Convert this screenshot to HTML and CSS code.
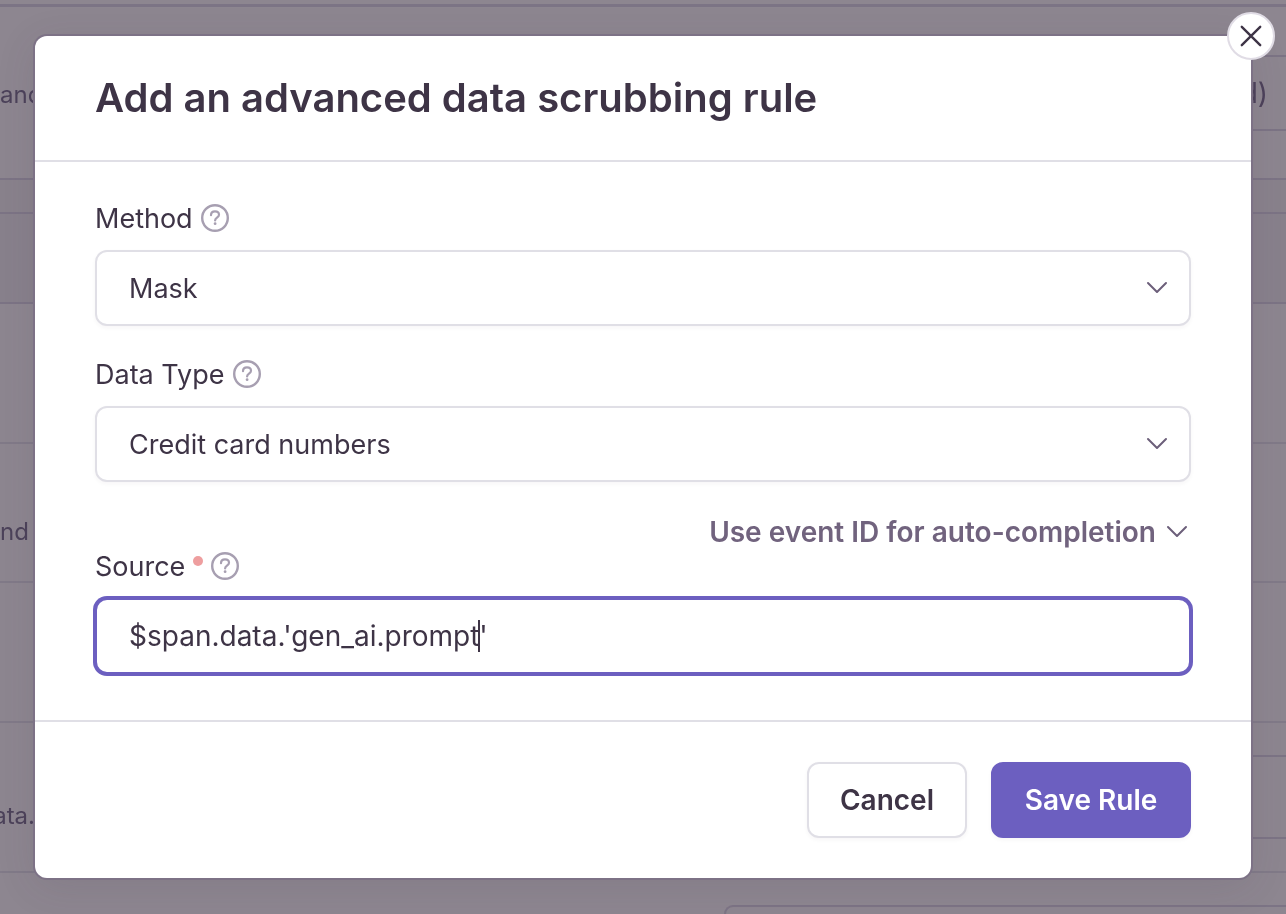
FILE: index.html
```html
<!DOCTYPE html>
<html lang="en">
<head>
<meta charset="utf-8">
<meta name="viewport" content="width=device-width, initial-scale=1">
<title>Add an advanced data scrubbing rule</title>
<link rel="stylesheet" href="styles.css">
</head>
<body>
<div class="page">
  <div class="page-top"></div>
  <div class="setting setting-first"><span class="first-line">and</span><span class="setting-value">d)</span></div>
  <div class="page-gap"></div>
  <div class="panel-head"></div>
  <div class="setting"></div>
  <div class="setting setting-text"><span class="second-line">nd e</span></div>
  <div class="setting"></div>
  <div class="setting setting-tall"><span class="second-line clipped">ata.</span><span class="setting-value"></span></div>
  <div class="page-card"></div>
</div>

<div class="overlay">
  <form class="modal" role="dialog" aria-labelledby="modal-title">
    <button class="close" type="button" aria-label="Close">
      <svg width="22" height="22" viewBox="0 0 22 22"><path d="M1.8 1.8l18.4 18.4M20.2 1.8L1.8 20.2"/></svg>
    </button>
    <header class="modal-header"><h1 id="modal-title">Add an advanced data scrubbing rule</h1></header>
    <div class="modal-body">
      <div class="field">
        <div class="label-row">
          <label for="method">Method</label>
          <svg class="help" viewBox="0 0 28 28"><circle cx="14" cy="14" r="12.8"/><path d="M10 11.2c0-2.3 1.7-3.8 4-3.8s4 1.4 4 3.4c0 2.8-3.9 3-3.9 5.6"/><circle class="help-dot" cx="14.1" cy="19.7" r="1.4"/></svg>
        </div>
        <div class="control">
          <select id="method"><option>Mask</option></select>
          <svg class="chevron" viewBox="0 0 22 14"><path d="M2 2l9 9 9-9"/></svg>
        </div>
      </div>
      <div class="field">
        <div class="label-row">
          <label for="type">Data Type</label>
          <svg class="help" viewBox="0 0 28 28"><circle cx="14" cy="14" r="12.8"/><path d="M10 11.2c0-2.3 1.7-3.8 4-3.8s4 1.4 4 3.4c0 2.8-3.9 3-3.9 5.6"/><circle class="help-dot" cx="14.1" cy="19.7" r="1.4"/></svg>
        </div>
        <div class="control">
          <select id="type"><option>Credit card numbers</option></select>
          <svg class="chevron" viewBox="0 0 22 14"><path d="M2 2l9 9 9-9"/></svg>
        </div>
      </div>
      <button class="toggle" type="button">Use event ID for auto-completion
        <svg viewBox="0 0 22 14"><path d="M2 2l9 9 9-9"/></svg>
      </button>
      <div class="field">
        <div class="label-row">
          <label for="source">Source</label>
          <span class="required"></span>
          <svg class="help" viewBox="0 0 28 28"><circle cx="14" cy="14" r="12.8"/><path d="M10 11.2c0-2.3 1.7-3.8 4-3.8s4 1.4 4 3.4c0 2.8-3.9 3-3.9 5.6"/><circle class="help-dot" cx="14.1" cy="19.7" r="1.4"/></svg>
        </div>
        <div class="control">
          <input id="source" type="text" value="$span.data.'gen_ai.prompt'" required>
          <span class="caret"></span>
        </div>
      </div>
    </div>
    <footer class="modal-footer">
      <button class="button" type="button">Cancel</button>
      <button class="button primary" type="submit">Save Rule</button>
    </footer>
  </form>
</div>
</body>
</html>
```
FILE: styles.css
```css
* { box-sizing: border-box; }
body {
  margin: 0;
  color: #3e3446;
  background: #8d8690;
  font: 27px/36px Inter, Roboto, sans-serif;
}
button, input, select { font: inherit; color: inherit; }

/* Page behind the dialog */
.page {
  position: fixed;
  inset: 0;
  display: flex;
  flex-direction: column;
  overflow: hidden;
  color: #4c425a;
  font-size: 24px;
}
.page-top { height: 7px; border-bottom: 3px solid #7c7485; flex: none; }
.setting {
  flex: none;
  height: 140px;
  display: flex;
  justify-content: space-between;
  align-items: center;
  border-bottom: 2px solid #817a88;
}
.setting-first { height: 173px; border-color: #7c7485; }
.setting-text { height: 139px; }
.setting-tall { height: 150px; }
.setting-value {
  width: 300px;
  height: 76px;
  padding: 18px;
  border: 2px solid #7c7485;
  border-right: 0;
  text-align: right;
  font-size: 28px;
}
.setting-tall .setting-value { height: 84px; }
.first-line { padding-top: 4px; }
.second-line { padding-top: 38px; }
.clipped { width: 35px; display: flex; justify-content: flex-end; }
.page-gap { flex: none; height: 32px; background: #89828c; }
.panel-head {
  flex: none;
  height: 92px;
  border: solid #7c7485;
  border-width: 2px 0;
  background: #88818c;
}
.page-card {
  flex: 1;
  margin: 32px 0 0 724px;
  border: solid #7c7485;
  border-width: 2px 0 0 2px;
  border-top-left-radius: 12px;
}

/* Dialog */
.overlay { position: relative; padding: 36px 35px; }
.modal {
  position: relative;
  background: #fff;
  border-radius: 12px;
  box-shadow: 0 0 0 2px #7d7286, 0 8px 40px rgba(62, 52, 70, 0.12);
}
.close {
  position: absolute;
  top: -24px;
  right: -24px;
  width: 48px;
  height: 48px;
  padding: 0;
  display: grid;
  place-items: center;
  background: #fff;
  border: 2px solid #e0dce5;
  border-radius: 50%;
}
svg { fill: none; stroke: #6c5f7a; stroke-width: 2; stroke-linecap: round; stroke-linejoin: round; }
.close svg { stroke: #3e3446; stroke-width: 2.4; }
.modal-header { padding: 38px 60px; border-bottom: 2px solid #e0dfe6; }
h1 { margin: 0; font-size: 40px; line-height: 48px; font-weight: 600; }
.modal-body { padding: 38px 60px 46px; }
.field + .field { margin-top: 30px; }
.label-row { display: flex; align-items: center; gap: 8px; height: 36px; margin-bottom: 14px; }
label { padding-top: 2px; }
.help { width: 28px; height: 28px; stroke: #a79fb1; stroke-width: 2.4; }
.help path { stroke-width: 2.2; }
.help .help-dot { fill: #a79fb1; stroke: none; }
.required { width: 10px; height: 10px; margin-bottom: 10px; border-radius: 50%; background: #ee9e9f; }
.control { position: relative; }
select, input {
  display: block;
  width: 100%;
  height: 76px;
  padding: 2px 32px 0;
  appearance: none;
  background: #fff;
  border: 2px solid #e0dfe6;
  border-radius: 12px;
  box-shadow: 0 2px 4px rgba(43, 34, 51, 0.04);
  outline: 0;
}
input { padding-top: 0; font-size: 28px; border-color: #6c5fc0; box-shadow: 0 0 0 2px #6c5fc0; }
.chevron { position: absolute; right: 23px; top: 31px; width: 22px; height: 14px; pointer-events: none; }
.caret { position: absolute; left: 383px; top: 22px; width: 2px; height: 32px; background: #3e3446; }
.toggle {
  display: flex;
  align-items: center;
  gap: 10px;
  margin: 34px 0 0 auto;
  padding: 0 3px;
  border: 0;
  background: none;
  color: #71637e;
  font-size: 28px;
  font-weight: 600;
  line-height: 32px;
}
.toggle svg { width: 22px; height: 14px; }
.modal-footer {
  display: flex;
  justify-content: flex-end;
  gap: 24px;
  padding: 40px 60px;
  border-top: 2px solid #e0dfe6;
}
.button {
  min-width: 160px;
  height: 76px;
  padding: 0 30px;
  border: 2px solid #e0dfe6;
  border-radius: 12px;
  background: #fff;
  box-shadow: 0 2px 4px rgba(43, 34, 51, 0.04);
  font-size: 28px;
  font-weight: 600;
}
.primary { min-width: 200px; color: #fff; background: #6c5fc0; border-color: #6c5fc0; }
```
